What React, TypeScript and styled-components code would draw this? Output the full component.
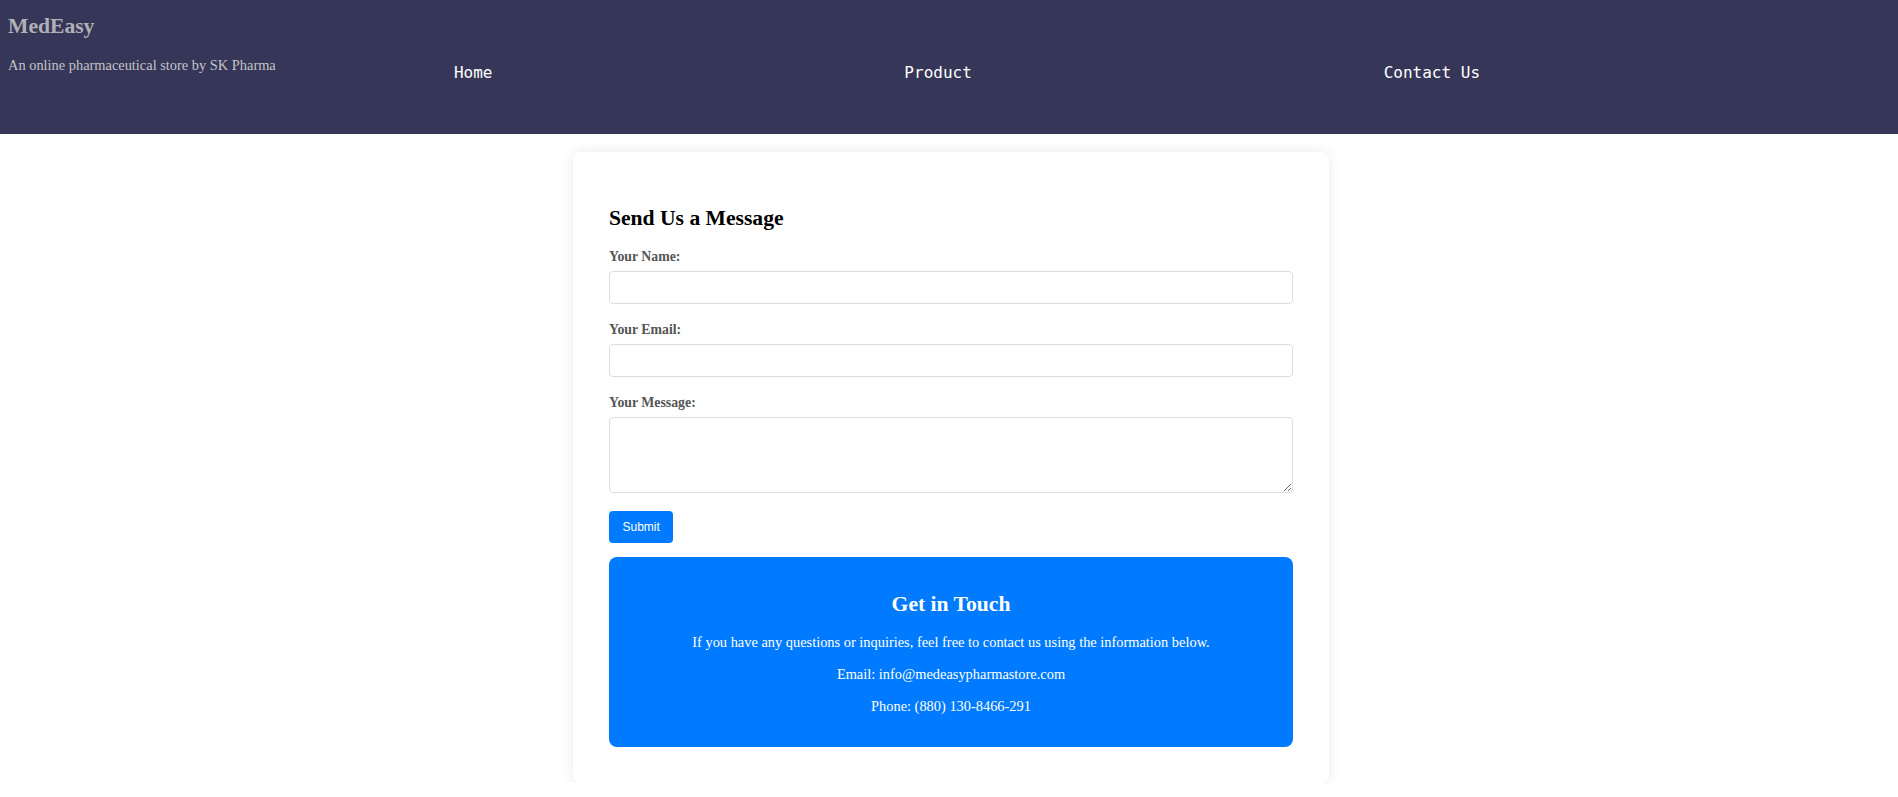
import styled, { createGlobalStyle } from "styled-components";

const GlobalStyle = createGlobalStyle`
  * {
    box-sizing: border-box;
  }

  body {
    margin: 0;
    background: #fff;
    font-family: "Liberation Serif", "Times New Roman", serif;
    color: #000;
  }
`;

const Header = styled.header`
  display: flex;
  height: 134px;
  padding: 0 8px;
  background: #363658;
`;

const Brand = styled.div`
  flex: 0 0 240px;
  min-width: 0;
  white-space: nowrap;
`;

const Title = styled.h1`
  margin: 13.5px 0 0;
  font-size: 21.6px;
  line-height: 1.15;
  font-weight: bold;
  color: #b0b0b6;
`;

const Tagline = styled.p`
  margin: 18.8px 0 0;
  font-size: 14.4px;
  line-height: 1.15;
  color: #c4c4c8;
`;

const Nav = styled.ul`
  flex: 0 0 1438px;
  display: flex;
  justify-content: space-around;
  align-items: flex-start;
  margin: 0;
  padding: 63px 0 0;
  list-style: none;
`;

const NavItem = styled.li`
  font-family: "DejaVu Sans Mono", "Liberation Mono", monospace;
  font-size: 16px;
  line-height: 19px;
  color: #fff;
  cursor: pointer;
`;

const Main = styled.div`
  padding: 18px 0 0 4px;
`;

const Card = styled.main`
  width: 756px;
  margin: 0 auto;
  padding: 36px;
  border-radius: 8px;
  background: #fff;
  box-shadow: 0 0 14px rgba(0, 0, 0, 0.09);
`;

const FormTitle = styled.h2`
  margin: 17.9px 0;
  font-size: 21.6px;
  line-height: 1.15;
  font-weight: bold;
`;

const Form = styled.form`
  display: flex;
  flex-direction: column;
`;

const Label = styled.label`
  display: block;
  margin-bottom: 6px;
  font-size: 13.8px;
  line-height: 16px;
  font-weight: bold;
  color: #555;
`;

const Input = styled.input`
  display: block;
  width: 100%;
  height: 33px;
  margin: 0 0 18px;
  padding: 8px;
  border: 1px solid #ddd;
  border-radius: 4px;
  font-size: 14px;
`;

const TextArea = styled.textarea`
  display: block;
  width: 100%;
  height: 76px;
  margin: 0 0 18px;
  padding: 8px;
  border: 1px solid #ddd;
  border-radius: 4px;
  font-size: 14px;
`;

const SubmitButton = styled.button`
  align-self: flex-start;
  height: 32px;
  padding: 0 13.5px;
  border: 0;
  border-radius: 4px;
  background: #007bff;
  color: #fff;
  font-family: "Liberation Sans", Arial, sans-serif;
  font-size: 12px;
  cursor: pointer;
`;

const InfoBox = styled.section`
  margin-top: 14px;
  padding: 20px 20px 17px;
  border-radius: 8px;
  background: #007bff;
  color: #fff;
  text-align: center;
`;

const InfoTitle = styled.h2`
  margin: 15px 0 18px;
  font-size: 21.6px;
  line-height: 1.15;
  font-weight: bold;
`;

const InfoText = styled.p`
  margin: 14.4px 0;
  font-size: 14.4px;
  line-height: 17.6px;
`;

export default function App() {
  return (
    <>
      <GlobalStyle />
      <Header>
        <Brand>
          <Title>MedEasy</Title>
          <Tagline>An online pharmaceutical store by SK Pharma</Tagline>
        </Brand>
        <Nav>
          <NavItem>Home</NavItem>
          <NavItem>Product</NavItem>
          <NavItem>Contact Us</NavItem>
        </Nav>
      </Header>

      <Main>
        <Card>
          <FormTitle>Send Us a Message</FormTitle>
          <Form onSubmit={(e) => e.preventDefault()}>
            <Label htmlFor="name">Your Name:</Label>
            <Input id="name" type="text" />

            <Label htmlFor="email">Your Email:</Label>
            <Input id="email" type="email" />

            <Label htmlFor="message">Your Message:</Label>
            <TextArea id="message" />

            <SubmitButton type="submit">Submit</SubmitButton>
          </Form>

          <InfoBox>
            <InfoTitle>Get in Touch</InfoTitle>
            <InfoText>
              If you have any questions or inquiries, feel free to contact us
              using the information below.
            </InfoText>
            <InfoText>Email: info@medeasypharmastore.com</InfoText>
            <InfoText>Phone: (880) 130-8466-291</InfoText>
          </InfoBox>
        </Card>
      </Main>
    </>
  );
}
